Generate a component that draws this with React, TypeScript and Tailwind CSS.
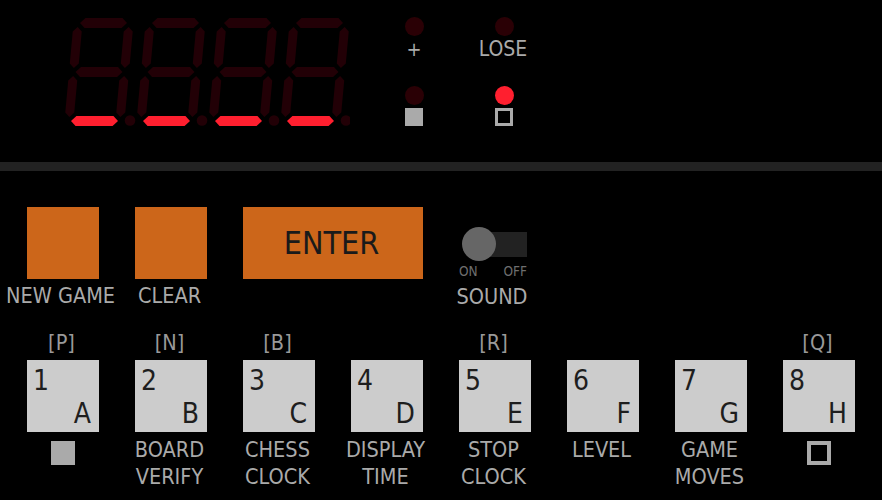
import React from "react";

const K = 0.092;
const BASE = 121;

function sk(pts: [number, number][]): string {
  return pts.map(([x, y]) => `${(x + (BASE - y) * K).toFixed(2)},${y}`).join(" ");
}

function hSeg(x1: number, x2: number, y: number): string {
  const h = 5;
  return sk([
    [x1, y],
    [x1 + h, y - h],
    [x2 - h, y - h],
    [x2, y],
    [x2 - h, y + h],
    [x1 + h, y + h],
  ]);
}

function vSeg(x: number, y1: number, y2: number): string {
  const h = 4.5;
  return sk([
    [x, y1],
    [x + h, y1 + h],
    [x + h, y2 - h],
    [x, y2],
    [x - h, y2 - h],
    [x - h, y1 + h],
  ]);
}

const DIM = "#220006";
const LIT = "#ff1f2f";

function Digit({ ox, lit }: { ox: number; lit: string }) {
  const L = ox + 69;
  const R = ox + 120;
  const a = ox + 71;
  const b = ox + 118;
  const segs: [string, string][] = [
    ["a", hSeg(a, b, 23)],
    ["g", hSeg(a, b, 72)],
    ["d", hSeg(a, b, 121)],
    ["f", vSeg(L, 27, 68)],
    ["b", vSeg(R, 27, 68)],
    ["e", vSeg(L, 76, 117)],
    ["c", vSeg(R, 76, 117)],
  ];
  return (
    <g>
      {segs.map(([k, p]) => (
        <polygon key={k} points={p} fill={lit.includes(k) ? LIT : DIM} />
      ))}
      <circle cx={ox + 130} cy={120.5} r={5.3} fill={DIM} />
    </g>
  );
}

const font = { fontFamily: '"DejaVu Sans Condensed", "DejaVu Sans", sans-serif' };

function Key({ n, l }: { n: string; l: string }) {
  return (
    <div className="w-[72px] h-[72px] bg-[#cccccc] flex flex-col justify-between text-[28px] leading-[28px] text-[#1e1e1e] pt-[7px] pl-[6px] pr-[8px] pb-[4px]">
      <span>{n}</span>
      <span className="self-end">{l}</span>
    </div>
  );
}

const keys = [
  { b: "[P]", n: "1", l: "A", lab: [] as string[], ind: "fill" },
  { b: "[N]", n: "2", l: "B", lab: ["BOARD", "VERIFY"] },
  { b: "[B]", n: "3", l: "C", lab: ["CHESS", "CLOCK"] },
  { b: "", n: "4", l: "D", lab: ["DISPLAY", "TIME"] },
  { b: "[R]", n: "5", l: "E", lab: ["STOP", "CLOCK"] },
  { b: "", n: "6", l: "F", lab: ["LEVEL"] },
  { b: "", n: "7", l: "G", lab: ["GAME", "MOVES"] },
  { b: "[Q]", n: "8", l: "H", lab: [], ind: "outline" },
];

export default function App() {
  return (
    <div className="w-[882px] h-[500px] bg-black overflow-hidden flex flex-col" style={font}>
      {/* Top display */}
      <div className="h-[162px] flex">
        <svg width={350} height={140} viewBox="0 0 350 140" className="shrink-0">
          <Digit ox={0} lit="d" />
          <Digit ox={72} lit="d" />
          <Digit ox={144} lit="d" />
          <Digit ox={216} lit="d" />
        </svg>
        <div className="ml-[34px] flex gap-[30px] pt-[17px]">
          <div className="w-[60px] flex flex-col items-center">
            <div className="w-[19px] h-[19px] rounded-full bg-[#2a0005]" />
            <div className="mt-[2px] h-[22px] leading-[22px] text-[20px] text-[#aaaaaa]">+</div>
            <div className="mt-[26px] w-[19px] h-[19px] rounded-full bg-[#2a0005]" />
            <div className="mt-[3px] w-[18px] h-[18px] bg-[#aaaaaa]" />
          </div>
          <div className="w-[60px] flex flex-col items-center">
            <div className="w-[19px] h-[19px] rounded-full bg-[#2a0005]" />
            <div className="mt-[2px] h-[22px] leading-[22px] text-[21px] text-[#aaaaaa] pr-[2px]">LOSE</div>
            <div className="mt-[26px] w-[19px] h-[19px] rounded-full bg-[#ff1f2f]" />
            <div className="mt-[3px] w-[18px] h-[18px] border-[3px] border-[#aaaaaa]" />
          </div>
        </div>
      </div>
      <div className="h-[9px] bg-[#222222] shrink-0" />

      {/* Controls */}
      <div className="pt-[36px] px-[9px]">
        <div className="flex">
          <div className="w-[108px] flex flex-col items-center">
            <div className="w-[72px] h-[72px] bg-[#cc661a]" />
            <div className="mt-[3px] pr-[5px] text-[21.5px] leading-[27px] text-[#aaaaaa] whitespace-nowrap">NEW GAME</div>
          </div>
          <div className="w-[108px] flex flex-col items-center">
            <div className="w-[72px] h-[72px] bg-[#cc661a]" />
            <div className="mt-[3px] pr-[3px] text-[21.5px] leading-[27px] text-[#aaaaaa]">CLEAR</div>
          </div>
          <div className="ml-[18px] w-[180px] h-[72px] bg-[#cc661a] flex items-center justify-center pr-[3px] text-[32px] text-[#1a1a1a]">
            ENTER
          </div>
          <div className="ml-[36px] w-[68px] flex flex-col items-center">
            <div className="relative w-[68px] h-[34px] mt-[20px]">
              <div className="absolute left-[9px] right-0 top-[4.5px] h-[25px] bg-[#222222]" />
              <div className="absolute left-[3px] top-0 w-[34px] h-[34px] rounded-full bg-[#666666]" />
            </div>
            <div className="w-[68px] flex justify-between text-[13.5px] leading-[16px] text-[#6e6e6e] mt-[2px]">
              <span>ON</span>
              <span>OFF</span>
            </div>
            <div className="mt-[4px] pr-[2px] text-[21.5px] leading-[27px] text-[#aaaaaa]">SOUND</div>
          </div>
        </div>

        <div className="flex mt-[19px]">
          {keys.map((k) => (
            <div key={k.n} className="w-[108px] flex flex-col items-center">
              <div className="h-[27px] pr-[3px] text-[21.5px] leading-[27px] text-[#999999]">{k.b}</div>
              <div className="mt-[4px]">
                <Key n={k.n} l={k.l} />
              </div>
              <div className="mt-[4px] flex flex-col items-center text-[21.5px] leading-[27px] text-[#aaaaaa]">
                {k.ind === "fill" && <div className="mt-[5px] w-[24px] h-[24px] bg-[#aaaaaa]" />}
                {k.ind === "outline" && <div className="mt-[5px] w-[24px] h-[24px] border-[4px] border-[#aaaaaa]" />}
                {k.lab.map((t) => (
                  <span key={t} className="pr-[3px]">
                    {t}
                  </span>
                ))}
              </div>
            </div>
          ))}
        </div>
      </div>
    </div>
  );
}
